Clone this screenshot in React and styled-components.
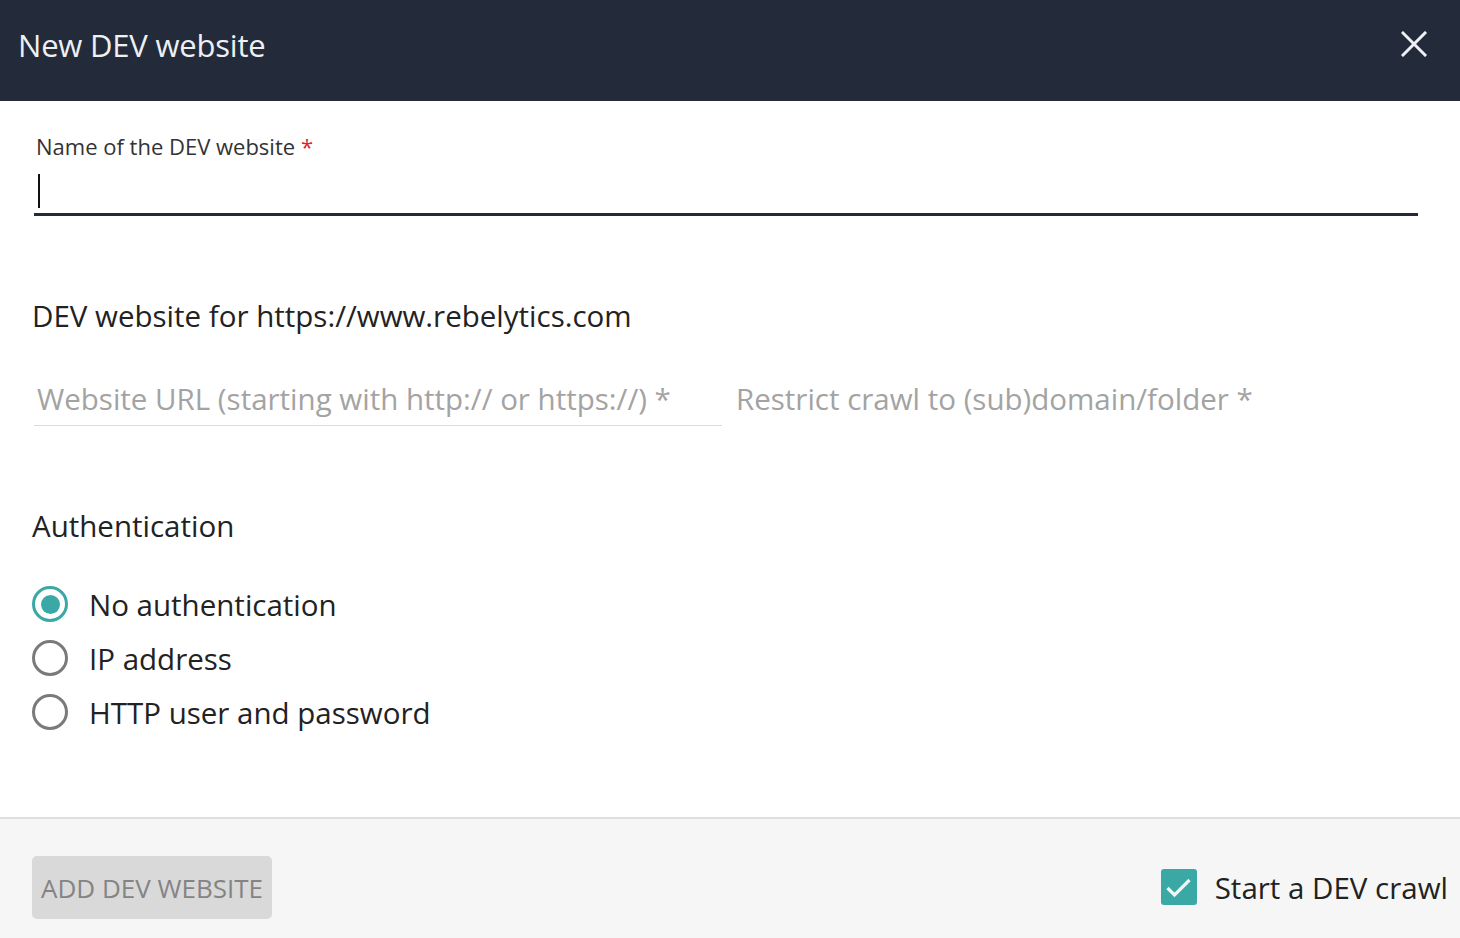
import React, { useState } from "react";
import styled, { createGlobalStyle } from "styled-components";

const Global = createGlobalStyle`
  html, body { margin: 0; padding: 0; background: #fff; }
  body { font-family: "Open Sans", "Noto Sans", Arial, sans-serif; -webkit-font-smoothing: antialiased; }
  * { box-sizing: border-box; }
`;

const Dialog = styled.div`
  width: 1460px;
  height: 938px;
  display: flex;
  flex-direction: column;
  background: #fff;
`;

const Header = styled.header`
  height: 101px;
  flex: none;
  background: #232b3b;
  display: flex;
  align-items: center;
  justify-content: space-between;
  padding: 0 30px 0 18px;
`;

const Title = styled.h1`
  margin: 0;
  font-size: 31px;
  font-weight: 400;
  color: #eef0f3;
  letter-spacing: -0.2px;
  padding-bottom: 12px;
`;

const CloseButton = styled.button`
  border: none;
  background: transparent;
  padding: 0;
  width: 32px;
  height: 32px;
  display: flex;
  align-items: center;
  justify-content: center;
  cursor: pointer;
  margin-bottom: 13px;
`;

const Body = styled.main`
  flex: 1;
  padding: 0 42px 0 32px;
  display: flex;
  flex-direction: column;
`;

const NameField = styled.label`
  display: flex;
  flex-direction: column;
  margin-top: 30px;
  margin-left: 2px;
`;

const NameLabel = styled.span`
  font-size: 22px;
  color: #333;
  margin-left: 2px;
  line-height: 30px;
`;

const Required = styled.span`
  color: #e0242c;
  margin-left: 6px;
`;

const InputWrap = styled.div`
  position: relative;
  display: flex;
  flex-direction: column;
`;

const Caret = styled.span`
  position: absolute;
  left: 4px;
  top: 13px;
  width: 2px;
  height: 34px;
  background: #111;
  pointer-events: none;
`;

const NameInput = styled.input`
  border: none;
  border-bottom: 3px solid #232b3b;
  outline: none;
  height: 55px;
  padding: 12px 0 6px 3px;
  font-family: inherit;
  font-size: 27px;
  color: #222;
  caret-color: #111;
  background: transparent;
`;

const SectionTitle = styled.h2`
  margin: ${(p) => p.$top}px 0 0;
  font-size: 29.5px;
  font-weight: 400;
  color: #222;
  line-height: 40px;
`;

const UrlRow = styled.div`
  display: flex;
  gap: 11px;
  margin-top: 40px;
  margin-left: 2px;
`;

const TextInput = styled.input`
  width: ${(p) => p.$width}px;
  height: 50px;
  border: none;
  border-bottom: 1px solid ${(p) => (p.$line ? "#dcdcdc" : "transparent")};
  outline: none;
  font-family: inherit;
  font-size: 29.5px;
  color: #222;
  padding: 0 0 5px 3px;
  background: transparent;
  &::placeholder { color: #a3a3a3; }
`;

const RadioGroup = styled.div`
  display: flex;
  flex-direction: column;
  gap: 18px;
  margin-top: 40px;
`;

const RadioRow = styled.label`
  display: flex;
  align-items: center;
  gap: 21px;
  height: 36px;
  font-size: 29.5px;
  color: #222;
  cursor: pointer;
`;

const RadioCircle = styled.span`
  width: 36px;
  height: 36px;
  border-radius: 50%;
  border: 3.5px solid ${(p) => (p.$checked ? "#3aa8a4" : "#7a7a7a")};
  display: flex;
  align-items: center;
  justify-content: center;
  flex: none;
  &::after {
    content: "";
    width: 19px;
    height: 19px;
    border-radius: 50%;
    background: #3aa8a4;
    display: ${(p) => (p.$checked ? "block" : "none")};
  }
`;

const Footer = styled.footer`
  height: 121px;
  flex: none;
  border-top: 2px solid #dedede;
  background: #f6f6f6;
  display: flex;
  padding: 37px 12px 0 32px;
`;

const FooterRow = styled.div`
  height: 63px;
  flex: 1;
  display: flex;
  align-items: center;
  justify-content: space-between;
`;

const AddButton = styled.button`
  width: 240px;
  height: 63px;
  border: none;
  border-radius: 5px;
  background: #d9d9d9;
  color: #848484;
  font-family: inherit;
  font-size: 26px;
  padding: 0;
  cursor: default;
`;

const CheckLabel = styled.label`
  display: flex;
  align-items: center;
  gap: 18px;
  font-size: 29.5px;
  color: #222;
`;

const CheckBox = styled.span`
  width: 36px;
  height: 36px;
  border-radius: 3px;
  background: #3aa8a4;
  display: block;
  margin-top: -2px;
`;

const options = ["No authentication", "IP address", "HTTP user and password"];

export default function App() {
  const [auth, setAuth] = useState(0);
  return (
    <>
      <Global />
      <Dialog>
        <Header>
          <Title>New DEV website</Title>
          <CloseButton aria-label="Close">
            <svg width="26" height="26" viewBox="0 0 26 26">
              <path d="M2 2 L24 24 M24 2 L2 24" stroke="#eef0f3" strokeWidth="3" strokeLinecap="square" />
            </svg>
          </CloseButton>
        </Header>
        <Body>
          <NameField>
            <NameLabel>
              Name of the DEV website<Required>*</Required>
            </NameLabel>
            <InputWrap>
              <NameInput />
              <Caret />
            </InputWrap>
          </NameField>
          <SectionTitle $top={80}>DEV website for https://www.rebelytics.com</SectionTitle>
          <UrlRow>
            <TextInput $width={688} $line placeholder="Website URL (starting with http:// or https://) *" />
            <TextInput $width={640} placeholder="Restrict crawl to (sub)domain/folder *" />
          </UrlRow>
          <SectionTitle $top={80}>Authentication</SectionTitle>
          <RadioGroup>
            {options.map((o, i) => (
              <RadioRow key={o} onClick={() => setAuth(i)}>
                <RadioCircle $checked={auth === i} />
                {o}
              </RadioRow>
            ))}
          </RadioGroup>
        </Body>
        <Footer>
          <FooterRow>
            <AddButton disabled>ADD DEV WEBSITE</AddButton>
            <CheckLabel>
              <CheckBox>
                <svg width="36" height="36" viewBox="0 0 36 36">
                  <path d="M6.5 19 L13.5 26 L28.5 11" stroke="#eef7f6" strokeWidth="3.2" fill="none" />
                </svg>
              </CheckBox>
              Start a DEV crawl
            </CheckLabel>
          </FooterRow>
        </Footer>
      </Dialog>
    </>
  );
}
